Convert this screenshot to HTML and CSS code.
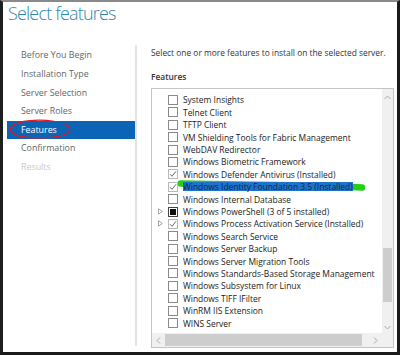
FILE: index.html
```html
<!DOCTYPE html>
<html lang="en">
<head>
  <meta charset="UTF-8">
  <title>Select features</title>
  <link rel="stylesheet" href="styles.css">
</head>
<body>

  <div class="window">
    <h1 class="title">Select features</h1>

    <div class="wizard">
      <!-- wizard steps -->
      <ul class="steps">
        <li>Before You Begin</li>
        <li>Installation Type</li>
        <li>Server Selection</li>
        <li>Server Roles</li>
        <li class="active">Features</li>
        <li>Confirmation</li>
        <li class="disabled">Results</li>
      </ul>

      <div class="page">
        <p class="intro">Select one or more features to install on the selected server.</p>
        <h2 class="label">Features</h2>

        <div class="listbox">
          <ul class="tree">
            <li class="node"><span class="exp"></span><span class="box"></span><span class="name">System Insights</span></li>
            <li class="node"><span class="exp"></span><span class="box"></span><span class="name">Telnet Client</span></li>
            <li class="node"><span class="exp"></span><span class="box"></span><span class="name">TFTP Client</span></li>
            <li class="node"><span class="exp"></span><span class="box"></span><span class="name">VM Shielding Tools for Fabric Management</span></li>
            <li class="node"><span class="exp"></span><span class="box"></span><span class="name">WebDAV Redirector</span></li>
            <li class="node"><span class="exp"></span><span class="box"></span><span class="name">Windows Biometric Framework</span></li>
            <li class="node"><span class="exp"></span><span class="box checked"><svg width="8" height="8" viewBox="0 0 8 8"><path d="M1 4.2 L3 6.3 L7 1.3" fill="none" stroke="#666" stroke-width="1"/></svg></span><span class="name">Windows Defender Antivirus (Installed)</span></li>
            <li class="node selected"><span class="exp"></span><span class="box checked"><svg width="8" height="8" viewBox="0 0 8 8"><path d="M1 4.2 L3 6.3 L7 1.3" fill="none" stroke="#666" stroke-width="1"/></svg></span>
              <svg class="marker" width="190" height="14" viewBox="0 0 190 14"><path d="M2.5 4.5 L60 5.5 L150 6.8 L184 8.5" fill="none" stroke="#24cf14" stroke-width="6.5" stroke-linecap="round" stroke-linejoin="round"/></svg>
              <span class="name">Windows Identity Foundation 3.5 (Installed)</span></li>
            <li class="node"><span class="exp"></span><span class="box"></span><span class="name">Windows Internal Database</span></li>
            <li class="node"><span class="exp"><svg width="5" height="7" viewBox="0 0 5 7"><path d="M0.5 0.8 L4.3 3.5 L0.5 6.2 Z" fill="none" stroke="#9a9a9a" stroke-width="0.9"/></svg></span><span class="box partial"><span class="fill"></span></span><span class="name">Windows PowerShell (3 of 5 installed)</span></li>
            <li class="node"><span class="exp"><svg width="5" height="7" viewBox="0 0 5 7"><path d="M0.5 0.8 L4.3 3.5 L0.5 6.2 Z" fill="none" stroke="#9a9a9a" stroke-width="0.9"/></svg></span><span class="box checked"><svg width="8" height="8" viewBox="0 0 8 8"><path d="M1 4.2 L3 6.3 L7 1.3" fill="none" stroke="#666" stroke-width="1"/></svg></span><span class="name">Windows Process Activation Service (Installed)</span></li>
            <li class="node"><span class="exp"></span><span class="box"></span><span class="name">Windows Search Service</span></li>
            <li class="node"><span class="exp"></span><span class="box"></span><span class="name">Windows Server Backup</span></li>
            <li class="node"><span class="exp"></span><span class="box"></span><span class="name">Windows Server Migration Tools</span></li>
            <li class="node"><span class="exp"></span><span class="box"></span><span class="name">Windows Standards-Based Storage Management</span></li>
            <li class="node"><span class="exp"></span><span class="box"></span><span class="name">Windows Subsystem for Linux</span></li>
            <li class="node"><span class="exp"></span><span class="box"></span><span class="name">Windows TIFF IFilter</span></li>
            <li class="node"><span class="exp"></span><span class="box"></span><span class="name">WinRM IIS Extension</span></li>
            <li class="node"><span class="exp"></span><span class="box"></span><span class="name">WINS Server</span></li>
          </ul>

          <!-- scrollbars -->
          <div class="vscroll">
            <div class="arrow up"><svg width="7" height="5" viewBox="0 0 7 5"><path d="M0.5 4 L3.5 1 L6.5 4" fill="none" stroke="#a8a8a8" stroke-width="1"/></svg></div>
            <div class="track"><div class="thumb"></div></div>
            <div class="arrow down"><svg width="7" height="5" viewBox="0 0 7 5"><path d="M0.5 1 L3.5 4 L6.5 1" fill="none" stroke="#a8a8a8" stroke-width="1"/></svg></div>
          </div>
          <div class="hscroll">
            <div class="arrow left"><svg width="5" height="7" viewBox="0 0 5 7"><path d="M4 0.5 L1 3.5 L4 6.5" fill="none" stroke="#a8a8a8" stroke-width="1"/></svg></div>
            <div class="hthumb"></div>
            <div class="arrow right"><svg width="5" height="7" viewBox="0 0 5 7"><path d="M1 0.5 L4 3.5 L1 6.5" fill="none" stroke="#a8a8a8" stroke-width="1"/></svg></div>
          </div>
        </div>
      </div>
    </div>

    <!-- red circle drawn round the step -->
    <svg class="circle" width="66" height="24" viewBox="0 0 66 24">
      <path d="M46 4.5 C 32 2, 10 3, 3.5 9.5 C 0 14, 5 19.5, 20 20.5 C 36 21.5, 57 20.5, 61 14.5 C 63 11, 61 8.5, 57 8" fill="none" stroke="#e3171c" stroke-width="1.3" stroke-linecap="round"/>
    </svg>
  </div>

</body>
</html>
```

FILE: styles.css
```css
* { box-sizing: border-box; }
body { margin: 0; font-family: "Open Sans", sans-serif; background: #fff; }

.window { position: relative; width: 400px; height: 355px; display: flex; flex-direction: column; border-top: 2px solid #8a8a8a; border-left: 3px solid #1e1e1e; border-right: 3px solid #1a1a1a; border-bottom: 3px solid #1a1a1a; overflow: hidden; }
.title { margin: 0; height: 43px; padding: 0 0 0 5px; font-size: 18px; font-weight: 300; line-height: 22px; letter-spacing: -0.8px; color: #2f88ab; }

.wizard { flex: 1; display: flex; }

.steps { width: 130px; list-style: none; margin: 0 0 6px 4px; padding: 1.4px 0 0; border-right: 2px solid #e4e4e4; }
.steps li { height: 18.6px; line-height: 18.6px; padding-left: 14px; font-size: 8.85px; color: #666; }
.steps .active { background: #0b64b5; color: #fff; }
.steps .disabled { color: #c9c9c9; }

.page { flex: 1; display: flex; flex-direction: column; padding: 2px 3px 4px 14px; }
.intro { margin: 0; font-size: 8.4px; line-height: 12px; color: #333; }
.label { margin: 11.5px 0 0; font-size: 8.4px; font-weight: 600; line-height: 12px; color: #333; }

.listbox { flex: 1; margin-top: 5.5px; border: 1px solid #c4c4c4; display: grid; grid-template-columns: 1fr 11px; grid-template-rows: 1fr 14px; min-height: 0; }
.tree { list-style: none; margin: 0; padding: 4.8px 0 0 4px; overflow: hidden; }
.node { position: relative; display: flex; align-items: center; height: 12.4px; font-size: 8.45px; color: #1a1a1a; white-space: nowrap; }
.exp { width: 11.7px; flex: none; display: flex; align-items: center; padding-left: 2px; }
.box { width: 10px; height: 10px; flex: none; margin-right: 5.3px; border: 1px solid #8a8a8a; display: flex; align-items: center; justify-content: center; }
.box.checked { border-color: #b8b8b8; }
.box.partial { border-color: #444; }
.box .fill { width: 6px; height: 6px; background: #111; }
.name { position: relative; line-height: 9px; }
.selected .name { background: #1f74c9; color: #10264a; }
.marker { position: absolute; left: 22px; top: -1.5px; }

.vscroll { display: flex; flex-direction: column; background: #f0f0f0; }
.vscroll .arrow { display: flex; align-items: center; justify-content: center; }
.vscroll .up { height: 16px; }
.vscroll .down { height: 12px; }
.track { flex: 1; padding: 143px 1px 0; }
.thumb { height: 54px; background: #cdcdcd; }

.hscroll { grid-column: 1 / 3; display: flex; align-items: center; background: #f0f0f0; }
.hscroll .left { width: 12px; display: flex; justify-content: center; }
.hthumb { width: 197px; height: 12px; margin-left: 1px; background: #cdcdcd; }
.hscroll .right { flex: 1; display: flex; justify-content: center; padding-right: 5px; }

.circle { position: absolute; left: 5px; top: 115px; }
```
